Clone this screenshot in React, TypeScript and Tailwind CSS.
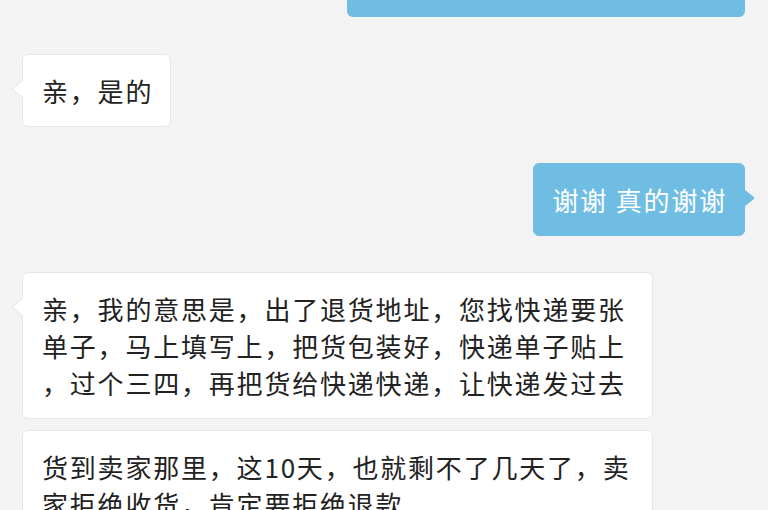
import React from 'react';

type Side = 'left' | 'right';

interface BubbleProps {
  side: Side;
  lines: string[];
  tail?: boolean;
  className?: string;
}

const Tail: React.FC<{ side: Side }> = ({ side }) =>
  side === 'left' ? (
    <svg
      className="absolute left-[-11px] top-[25px]"
      width="11"
      height="18"
      viewBox="0 0 11 18"
    >
      <path d="M11 0 L1.2 8 Q0 9 1.2 10 L11 18 Z" fill="#ffffff" />
      <path d="M10.5 0.5 L1.2 8 Q0 9 1.2 10 L10.5 17.5" fill="none" stroke="#e4e4e4" strokeWidth="1" />
    </svg>
  ) : (
    <svg
      className="absolute right-[-11px] top-[25px]"
      width="11"
      height="18"
      viewBox="0 0 11 18"
    >
      <path d="M0 0 L9.8 8 Q11 9 9.8 10 L0 18 Z" fill="#70bde4" />
    </svg>
  );

const Bubble: React.FC<BubbleProps> = ({ side, lines, tail = true, className = '' }) => {
  const isLeft = side === 'left';
  return (
    <div
      className={`relative rounded-[6px] border py-[17px] pl-[19px] pr-[17px] text-[26px] leading-[37px] tracking-[1.8px] ${
        isLeft
          ? 'self-start bg-white text-[#222222] border-[#e6e6e6]'
          : 'self-end bg-[#70bde4] text-white border-[#70bde4]'
      } ${className}`}
    >
      {lines.map((l, i) => (
        <span key={i} className="block whitespace-pre">
          {l}
        </span>
      ))}
      {tail && <Tail side={side} />}
    </div>
  );
};

export default function App() {
  return (
    <div
      className="h-[510px] w-[768px] overflow-hidden bg-[#f3f3f3] pl-[22px] pr-[23px]"
      style={{ fontFamily: '"Noto Sans CJK SC", "Noto Sans", sans-serif' }}
    >
      <div className="flex flex-col">
        {/* previous message, cut off at the top */}
        <div className="mt-[-55px] h-[72px] w-[398px] self-end rounded-[6px] bg-[#70bde4]" />

        <Bubble side="left" lines={['亲，是的']} className="mt-[37px]" />

        <Bubble side="right" lines={['谢谢 真的谢谢']} className="mt-[36px]" />

        <Bubble
          side="left"
          className="mt-[36px] w-[631px]"
          lines={[
            '亲，我的意思是，出了退货地址，您找快递要张',
            '单子，马上填写上，把货包装好，快递单子贴上',
            '，过个三四，再把货给快递快递，让快递发过去',
          ]}
        />

        <Bubble
          side="left"
          tail={false}
          className="mt-[11px] w-[631px]"
          lines={['货到卖家那里，这10天，也就剩不了几天了，卖', '家拒绝收货，肯定要拒绝退款']}
        />
      </div>
    </div>
  );
}
